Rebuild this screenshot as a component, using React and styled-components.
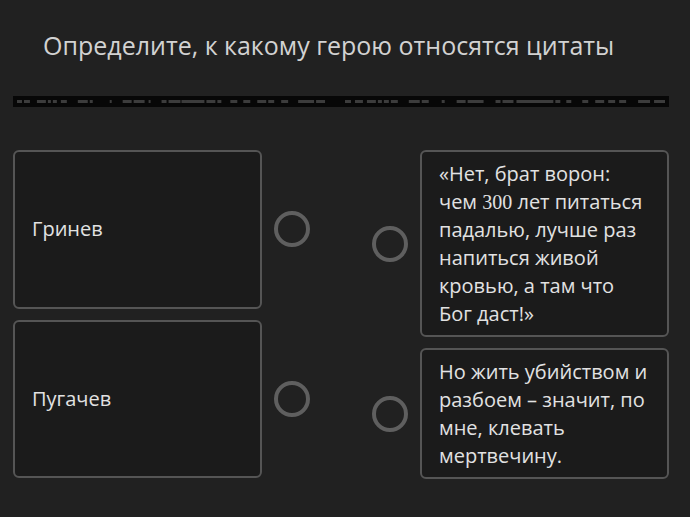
import styled, { createGlobalStyle } from 'styled-components';

const GlobalStyle = createGlobalStyle`
  body {
    margin: 0;
    background: #212121;
    font-family: "Open Sans", "Noto Sans", sans-serif;
  }
`;

// redacted strip under the title: [start, end] in page px
const dashes = [
  [17, 22], [24, 30], [37, 46], [48, 51], [53, 57], [61, 67], [78, 88], [90, 93],
  [110, 112], [123, 132], [134, 145], [149, 151], [162, 167], [169, 181], [182, 205],
  [207, 216], [218, 222], [231, 238], [244, 251], [258, 267], [269, 275], [282, 289],
  [299, 315], [317, 326], [346, 352], [356, 364], [368, 377], [379, 383], [385, 390],
  [392, 399], [410, 421], [423, 430], [443, 446], [458, 467], [469, 485], [497, 502],
  [504, 515], [518, 555], [557, 562], [568, 573], [584, 590], [597, 606], [610, 617],
  [621, 628], [640, 652], [656, 667],
];

const leftItems = ['Гринев', 'Пугачев'];

const App = () => {
  return (
    <Page>
      <GlobalStyle />
      <Title>Определите, к какому герою относятся цитаты</Title>
      <Strip>
        <svg width="658" height="11" viewBox="0 0 658 11">
          {dashes.map(([a, b]) => (
            <rect key={a} x={a - 13} y="4" width={b - a} height="3" fill="#3c3c3c" />
          ))}
        </svg>
      </Strip>
      <Board>
        <Column>
          {leftItems.map((name) => (
            <Item key={name}>
              <Card $center>{name}</Card>
              <Dot />
            </Item>
          ))}
        </Column>
        <Column>
          <Item>
            <Dot />
            <Card>
              «Нет, брат ворон: чем <Digits>300</Digits> лет питаться падалью, лучше раз напиться живой кровью, а там что Бог даст!»
            </Card>
          </Item>
          <Item>
            <Dot />
            <Card>Но жить убийством и разбоем – значит, по мне, клевать мертвечину.</Card>
          </Item>
        </Column>
      </Board>
    </Page>
  );
};

const Page = styled.div`
  width: 690px;
  height: 517px;
  padding: 28px 21px 0 13px;
  box-sizing: border-box;
`;

const Title = styled.h1`
  margin: 0 0 0 30px;
  font-size: 25px;
  font-weight: 400;
  font-stretch: 89%;
  color: #d2d2d2;
  line-height: 34px;
`;

const Strip = styled.div`
  margin-top: 34px;
  height: 11px;
  background: #070707;
  display: flex;
`;

const Board = styled.div`
  display: flex;
  justify-content: space-between;
  margin-top: 43px;
  height: 328px;
`;

const Column = styled.div`
  display: flex;
  flex-direction: column;
  gap: 11px;
`;

const Item = styled.div`
  display: flex;
  align-items: center;
  gap: 12px;
  flex: 1;
`;

const Card = styled.div`
  box-sizing: border-box;
  width: 249px;
  align-self: stretch;
  display: ${(p) => (p.$center ? 'flex' : 'block')};
  align-items: center;
  padding: ${(p) => (p.$center ? '0 16px 0 17px' : '8px 18px 7px 17px')};
  border: 2px solid #555;
  border-radius: 6px;
  background: #1b1b1b;
  color: #e2e2e2;
  font-size: 20px;
  line-height: 28px;
`;

const Digits = styled.span`
  font-family: "Liberation Serif", serif;
`;

const Dot = styled.div`
  width: 36px;
  height: 36px;
  box-sizing: border-box;
  border: 4px solid #5f5f5f;
  border-radius: 50%;
  flex-shrink: 0;
`;

export default App;
